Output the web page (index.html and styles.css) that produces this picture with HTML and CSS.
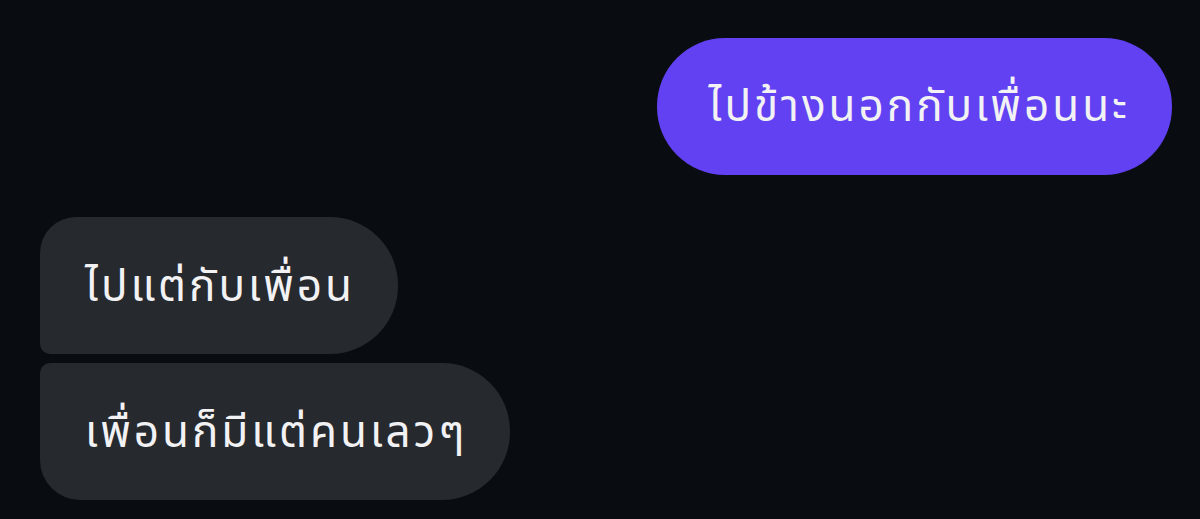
FILE: index.html
```html
<!DOCTYPE html>
<html lang="th">
<head>
<meta charset="utf-8">
<link rel="stylesheet" href="styles.css">
</head>
<body>
<main class="chat">
  <div class="row row-out">
    <div class="bubble bubble-out">ไปข้างนอกกับเพื่อนนะ</div>
  </div>
  <div class="group-in">
    <div class="row row-in">
      <div class="bubble bubble-in first">ไปแต่กับเพื่อน</div>
    </div>
    <div class="row row-in">
      <div class="bubble bubble-in last">เพื่อนก็มีแต่คนเลวๆ</div>
    </div>
  </div>
</main>
</body>
</html>
```
FILE: styles.css
```css
html, body {
  margin: 0;
  padding: 0;
  background: #090d12;
  height: 100%;
  overflow: hidden;
}
.chat {
  display: flex;
  flex-direction: column;
  padding: 38px 28px 0 40px;
  font-family: "Noto Sans Thai", "DejaVu Sans", "Noto Sans", sans-serif;
  color: #f2f2f4;
}
.row {
  display: flex;
}
.row-out {
  justify-content: flex-end;
}
.group-in {
  display: flex;
  flex-direction: column;
  gap: 9px;
  margin-top: 42px;
}
.bubble {
  box-sizing: border-box;
  height: 137px;
  display: flex;
  align-items: center;
  font-size: 44px;
  letter-spacing: 3px;
  line-height: 1;
  white-space: nowrap;
}
.bubble-out {
  background: #6141f2;
  border-radius: 68px;
  padding: 2px 42px 0 52px;
}
.bubble-in {
  background: #26292e;
  padding: 4px 43px 0 45px;
}
.bubble-in.first {
  border-radius: 36px 68px 68px 10px;
}
.bubble-in.last {
  border-radius: 10px 68px 68px 40px;
}
```
